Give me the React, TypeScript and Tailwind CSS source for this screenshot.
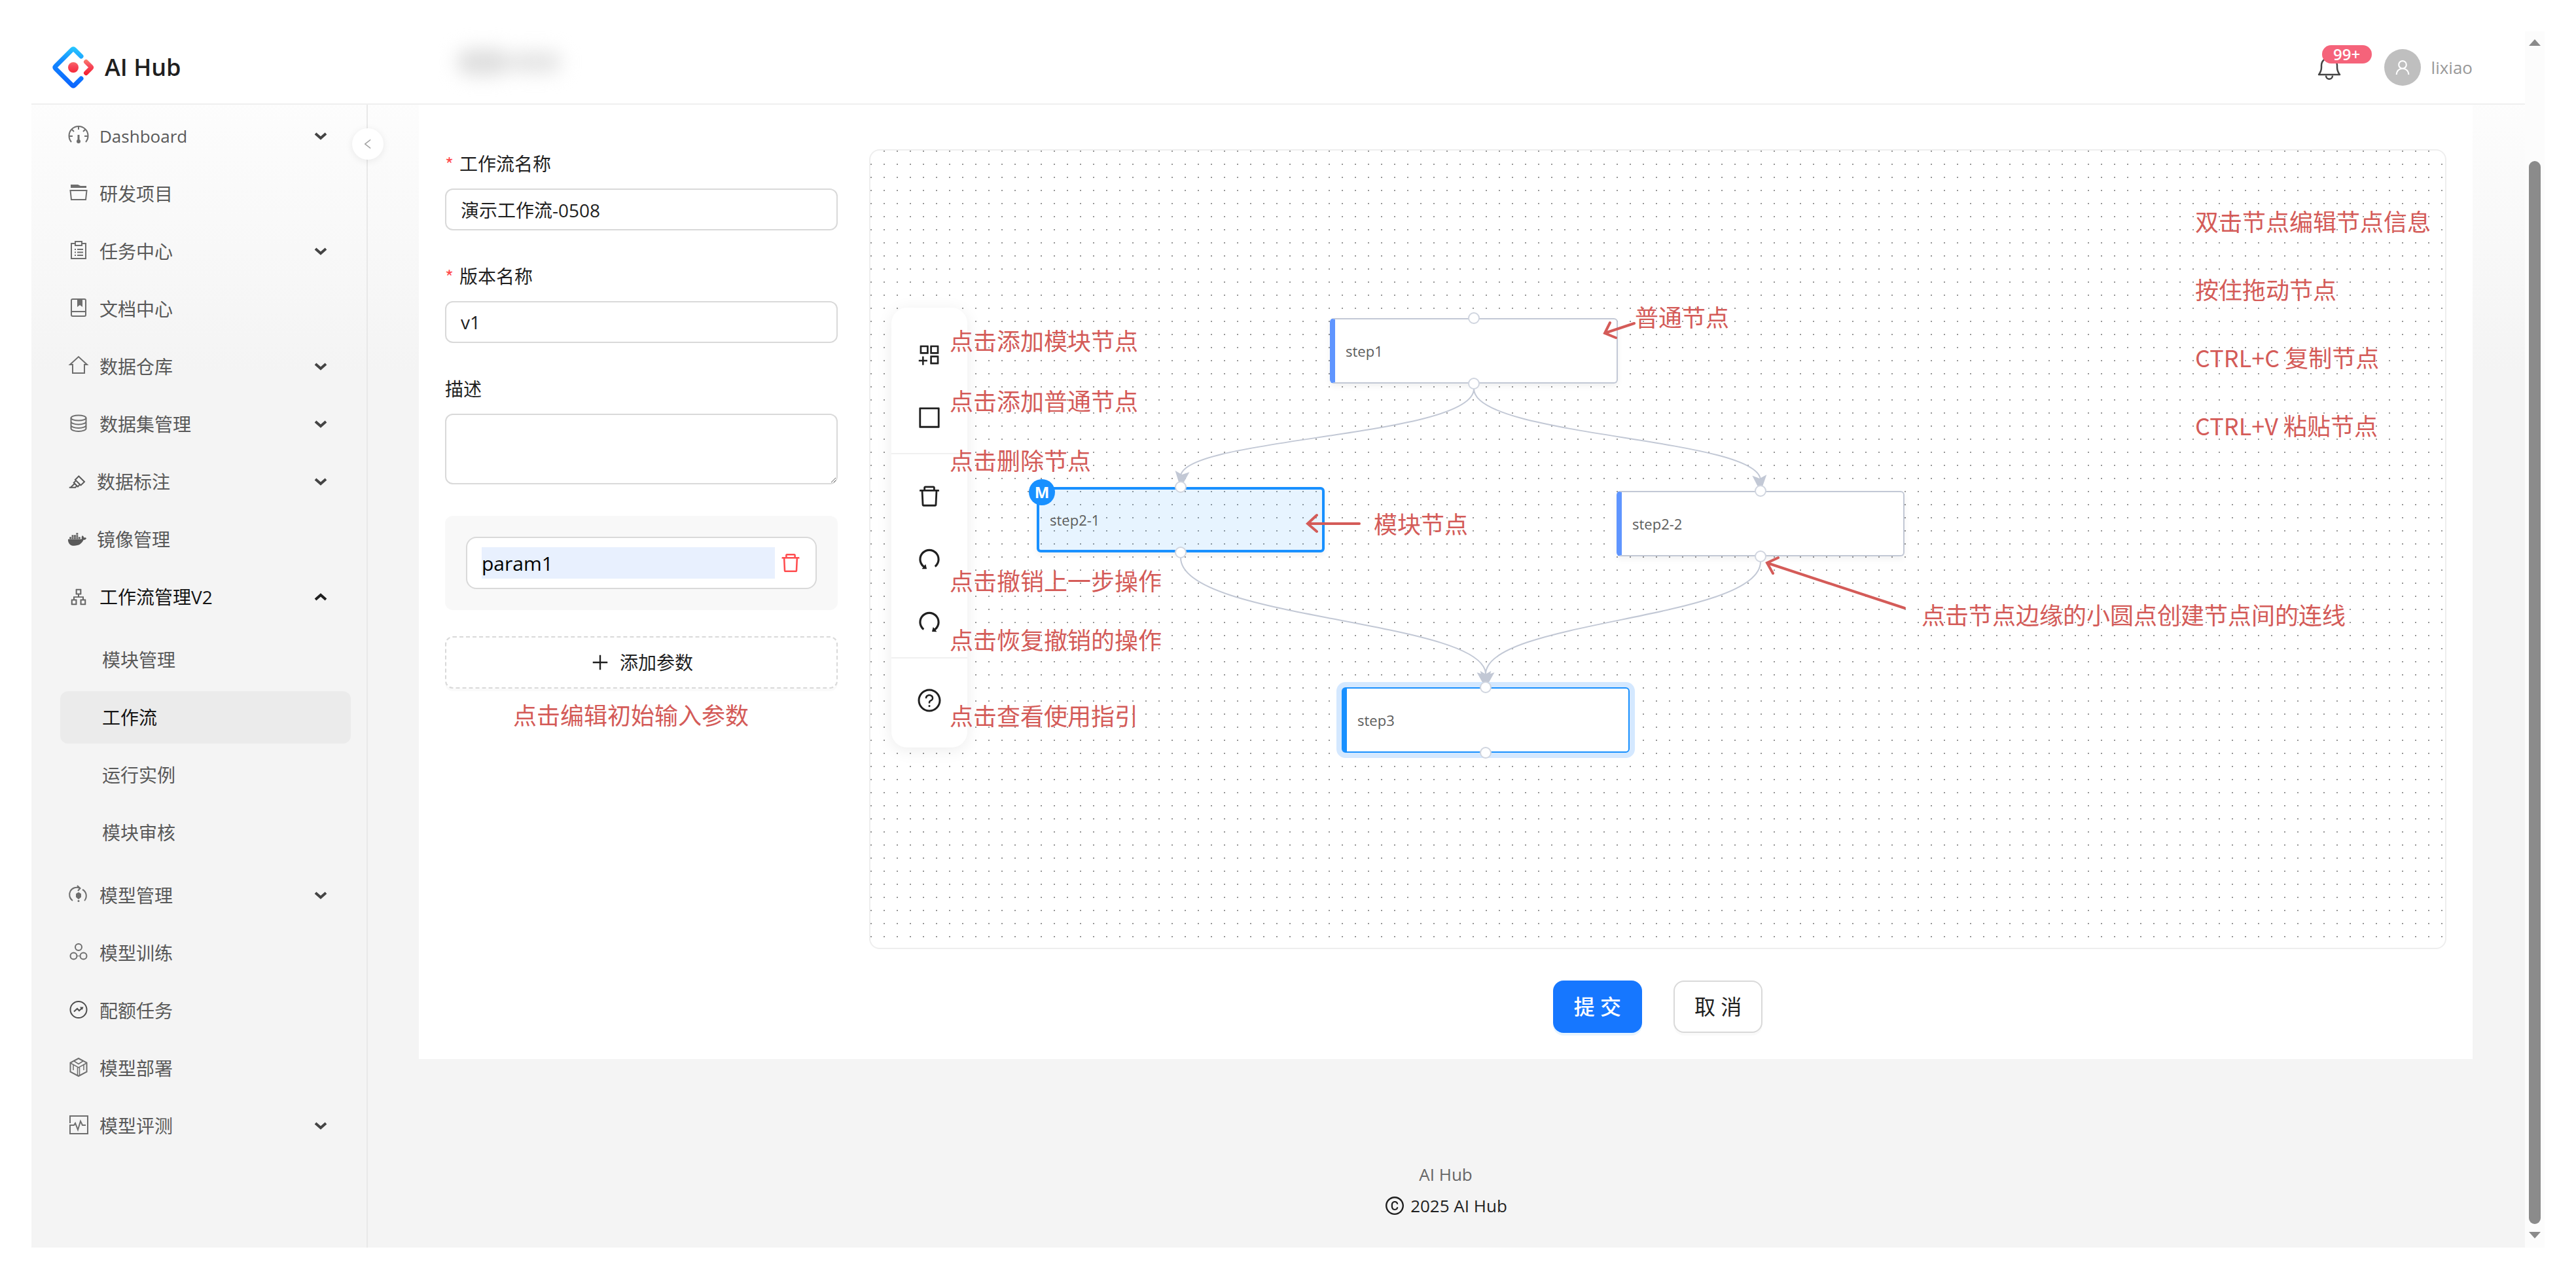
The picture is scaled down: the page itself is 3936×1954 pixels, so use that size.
import React from "react";
import type { ReactNode } from "react";
import {
  AiOutlineApartment,
  AiOutlineAppstoreAdd,
  AiOutlineBorder,
  AiOutlineCopyright,
  AiOutlineDelete,
  AiOutlineHighlight,
  AiOutlineLeft,
  AiOutlinePlus,
  AiOutlineQuestionCircle,
  AiOutlineRedo,
  AiOutlineUndo,
  AiOutlineUser,
} from "react-icons/ai";
import { FaDocker } from "react-icons/fa";

/* ---------- icons ---------- */

function MenuIcon({ children }: { children: ReactNode }) {
  return (
    <svg
      viewBox="0 0 28 28"
      className="size-7 shrink-0 overflow-visible text-[#6e6e6e]"
      fill="none"
      stroke="currentColor"
      strokeWidth="2"
      aria-hidden="true"
    >
      {children}
    </svg>
  );
}

const DashboardIcon = () => (
  <MenuIcon>
    <path d="M3 23A14.5 14.5 0 1 1 25 23" />
    <path d="M0 14h5M23 14h5M14 -1v5M4 4l3 3M24 4l-3 3" />
    <path d="M14 12v8" strokeWidth="3" />
    <circle cx="14" cy="22" r="3" fill="currentColor" stroke="none" />
  </MenuIcon>
);
const FolderIcon = () => (
  <MenuIcon>
    <path d="M2 0h11l4 2h9v3H2z" fill="currentColor" stroke="none" />
    <path d="M1.5 9h25l-1.5 14H3z" />
  </MenuIcon>
);
const TaskIcon = () => (
  <MenuIcon>
    <path d="M9 2H3v23h22V2h-6" />
    <path d="M9 -1h10v6H9z" />
    <path d="M8 11h2M12 11h9M8 15.500h2M12 15.500h9M8 20h2M12 20h9" />
  </MenuIcon>
);
const BookIcon = () => (
  <MenuIcon>
    <rect x="3" y="-1" width="22" height="26" rx="2" />
    <path d="M3 18h22" />
    <path d="M12 0h8v11l-4-3-4 3z" fill="currentColor" stroke="none" />
  </MenuIcon>
);
const HomeIcon = () => (
  <MenuIcon>
    <path d="M1 11h4v13h18V11h4L14 -1z" />
  </MenuIcon>
);
const DatabaseIcon = () => (
  <MenuIcon>
    <ellipse cx="14" cy="4.500" rx="11.500" ry="4" />
    <path d="M2.500 4.500v16c0 2.500 5 4.500 11.500 4.500s11.500-2 11.500-4.500v-16M2.500 10c0 2.500 5 4.500 11.500 4.500s11.500-2 11.500-4.500M2.500 15.500c0 2.500 5 4.500 11.500 4.500s11.500-2 11.500-4.500" />
  </MenuIcon>
);
const ModelIcon = () => (
  <MenuIcon>
    <path d="M5 22A11 11 0 0 1 16 3M12 -1l4.500 4L13 7M20 5A11 11 0 0 1 23 22" />
    <path d="M14 9l4 2.500v5L14 20l-4-3.500v-5z" fill="currentColor" stroke="none" />
    <circle cx="14" cy="22.500" r="1.500" fill="currentColor" stroke="none" />
  </MenuIcon>
);
const TrainIcon = () => (
  <MenuIcon>
    <circle cx="14" cy="5" r="5" />
    <circle cx="6.500" cy="18.500" r="5" />
    <circle cx="21.500" cy="18.500" r="5" />
    <path d="M11.500 18.500h5" strokeWidth="1" />
  </MenuIcon>
);
const QuotaIcon = () => (
  <MenuIcon>
    <g stroke="#4d4d4d">
      <circle cx="14" cy="12.500" r="12.500" />
      <path d="M7 15.500l5-4.500 3 3 5-4.500" />
      <path d="M16 8.500h5.500l-2 4.500z" fill="#4d4d4d" stroke="none" />
    </g>
  </MenuIcon>
);
const CubeIcon = () => (
  <MenuIcon>
    <path d="M14 -1L26.500 5.500v14L14 26 1.500 19.500v-14z" />
    <path d="M1.500 6L14 13l12.500-7M12.500 13v12M15.500 13v12M7 3l7 4.500L21 3M6 9v8M22 9v8" strokeWidth="1.500" />
  </MenuIcon>
);
const PulseIcon = () => (
  <MenuIcon>
    <path d="M1 10V-1h27v27H1V13h6l2-3 4 10 4-13 3 6h5" />
  </MenuIcon>
);

function Chevron({ up = false }: { up?: boolean }) {
  return (
    <svg viewBox="0 0 20 12" className="h-3 w-5" fill="none" stroke={up ? "#1f1f1f" : "#444444"} strokeWidth="4" aria-hidden="true">
      <path d={up ? "M2 10L10 3L18 10" : "M2 2L10 9L18 2"} />
    </svg>
  );
}

function Logo() {
  return (
    <svg viewBox="0 0 64 64" className="size-16" fill="none" strokeWidth="7" strokeLinecap="round" strokeLinejoin="round" aria-hidden="true">
      <defs>
        <linearGradient id="logo-blue" x1="40" y1="0" x2="24" y2="64" gradientUnits="userSpaceOnUse">
          <stop offset="0" stopColor="#29cdff" />
          <stop offset="0.4" stopColor="#148eff" />
          <stop offset="1" stopColor="#0a60ff" />
        </linearGradient>
        <linearGradient id="logo-red" x1="0" y1="20" x2="0" y2="44" gradientUnits="userSpaceOnUse">
          <stop offset="0" stopColor="#fa816e" />
          <stop offset="0.4" stopColor="#f74a5c" />
          <stop offset="1" stopColor="#f51d2c" />
        </linearGradient>
      </defs>
      <path d="M44 15L34 5Q32 3 30 5L5 30Q3 32 5 34L30 59Q32 61 34 59L44 49" stroke="url(#logo-blue)" />
      <path d="M51.500 23.500L59 31Q60 32 59 33L51.500 40.500" stroke="url(#logo-red)" />
      <circle cx="32" cy="32" r="8" fill="url(#logo-red)" />
    </svg>
  );
}

function BellIcon() {
  return (
    <svg viewBox="0 0 36 36" className="size-9 overflow-visible" fill="none" stroke="#444444" strokeWidth="2.500" strokeLinejoin="round" aria-hidden="true">
      <path d="M2 29C5 25 6 22 6 18V15A11.500 11.500 0 0 1 30 15V18C30 22 31 25 34 29Z" />
      <path d="M13 30.500C13 37.500 23 37.500 23 30.500" />
    </svg>
  );
}

/* ---------- side menu ---------- */

type Item = { label: string; icon: ReactNode; arrow?: "down" | "up"; tight?: boolean; latin?: boolean; children?: string[] };

const items: Item[] = [
  { label: "Dashboard", icon: <DashboardIcon />, arrow: "down", latin: true },
  { label: "研发项目", icon: <FolderIcon /> },
  { label: "任务中心", icon: <TaskIcon />, arrow: "down" },
  { label: "文档中心", icon: <BookIcon /> },
  { label: "数据仓库", icon: <HomeIcon />, arrow: "down" },
  { label: "数据集管理", icon: <DatabaseIcon />, arrow: "down" },
  { label: "数据标注", icon: <AiOutlineHighlight className="size-7 text-[#595959]" />, arrow: "down", tight: true },
  { label: "镜像管理", icon: <FaDocker className="size-7 text-[#595959]" />, tight: true },
  {
    label: "工作流管理V2",
    icon: <AiOutlineApartment className="size-7 text-[#666666]" />,
    arrow: "up",
    children: ["模块管理", "工作流", "运行实例", "模块审核"],
  },
  { label: "模型管理", icon: <ModelIcon />, arrow: "down" },
  { label: "模型训练", icon: <TrainIcon /> },
  { label: "配额任务", icon: <QuotaIcon /> },
  { label: "模型部署", icon: <CubeIcon /> },
  { label: "模型评测", icon: <PulseIcon />, arrow: "down" },
];

function Sidebar() {
  return (
    <aside className="relative w-[512px] shrink-0">
      <nav className="pt-2">
        <ul className="flex flex-col gap-2">
          {items.map((item) => (
            <li key={item.label}>
              <button
                type="button"
                className={`flex h-20 w-full items-center text-left ${item.tight ? "pl-14" : "pl-[58px]"} pr-[60px] ${item.arrow === "up" ? "text-[#141414]" : "text-[#595959]"}`}
              >
                {item.icon}
                <span className={`flex-1 leading-[44px] ${item.tight ? "ml-4" : "ml-[18px]"} ${item.latin ? "text-[26px]" : "text-[28px]"}`}>
                  {item.label}
                </span>
                {item.arrow && <Chevron up={item.arrow === "up"} />}
              </button>
              {item.children && (
                <ul className="mt-4 mb-4 flex flex-col gap-2 pr-6 pl-11 last:mb-2">
                  {item.children.map((child) => (
                    <li key={child}>
                      <a
                        href="#"
                        className={`flex h-20 items-center rounded-xl pl-16 text-[28px] leading-[44px] ${child === "工作流" ? "bg-[#ebebeb] text-[#141414]" : "text-[#595959]"}`}
                      >
                        {child}
                      </a>
                    </li>
                  ))}
                </ul>
              )}
            </li>
          ))}
        </ul>
      </nav>
      <button
        type="button"
        aria-label="收起菜单"
        className="absolute top-9 -right-[26px] z-10 flex size-12 items-center justify-center rounded-full bg-white text-[#a0a0a0] shadow-[0_2px_12px_rgba(0,0,0,0.08)]"
      >
        <AiOutlineLeft className="size-5" />
      </button>
    </aside>
  );
}

/* ---------- form ---------- */

function Field({ id, label, required, children }: { id: string; label: string; required?: boolean; children: ReactNode }) {
  return (
    <div className="mb-12">
      <label htmlFor={id} className="mb-4 flex gap-2 text-[28px] leading-[44px] text-[#1f1f1f]">
        {required && <span className="w-3.5 font-['Noto_Sans_CJK_SC'] text-[#ff4d4f]">*</span>}
        {label}
      </label>
      {children}
    </div>
  );
}

const inputStyle = "block h-16 w-full rounded-xl border-2 border-[#d9d9d9] bg-white px-[22px] text-[28px] text-[#1f1f1f]";

function WorkflowForm() {
  return (
    <form className="w-[600px] shrink-0">
      <Field id="name" label="工作流名称" required>
        <input id="name" className={inputStyle} defaultValue="演示工作流-0508" />
      </Field>
      <Field id="version" label="版本名称" required>
        <input id="version" className={inputStyle} defaultValue="v1" />
      </Field>
      <Field id="desc" label="描述">
        <textarea id="desc" className="block h-[108px] w-full resize-y rounded-xl border-2 border-[#d9d9d9] bg-white px-[22px] py-2 text-[28px]" />
      </Field>
      <div className="rounded-xl bg-[#f8f8f8] p-8">
        <div className="flex h-20 items-center rounded-2xl border-2 border-[#d9d9d9] bg-white pr-5 pl-[22px]">
          <input aria-label="参数名称" className="h-12 min-w-0 flex-1 bg-[#e8f0fe] text-[30px] text-black" defaultValue="param1" />
          <button type="button" aria-label="删除参数" className="ml-1.5 text-[#ff4d4f]">
            <AiOutlineDelete className="size-9" />
          </button>
        </div>
      </div>
      <button
        type="button"
        className="mt-10 flex h-20 w-full items-center justify-center gap-3.5 rounded-xl border-2 border-dashed border-[#d9d9d9] bg-white text-[28px] text-[#1f1f1f] shadow-[0_4px_0_rgba(0,0,0,0.02)]"
      >
        <AiOutlinePlus className="size-8" />
        添加参数
      </button>
      <p className="mt-4 ml-[104px] text-[36px] leading-[52px] text-[#d45b58]">点击编辑初始输入参数</p>
    </form>
  );
}

/* ---------- workflow canvas ---------- */

const edges = [
  "M922 364C922 438 474 438 474 498",
  "M922 364C922 438 1360 438 1360 504",
  "M474 622C474 717 940 717 940 800",
  "M1360 628C1360 717 940 717 940 800",
];
const heads = ["translate(474 514) rotate(6)", "translate(1360 520) rotate(-4)", "translate(940 820) rotate(-6)", "translate(940 820) rotate(6)"];

const labels = [
  { text: "点击添加模块节点", place: "left-[121px] top-[266px]" },
  { text: "点击添加普通节点", place: "left-[121px] top-[358px]" },
  { text: "点击删除节点", place: "left-[121px] top-[449px]" },
  { text: "点击撤销上一步操作", place: "left-[121px] top-[633px]" },
  { text: "点击恢复撤销的操作", place: "left-[121px] top-[723px]" },
  { text: "点击查看使用指引", place: "left-[121px] top-[839px]" },
  { text: "普通节点", place: "left-[1168px] top-[230px]" },
  { text: "模块节点", place: "left-[769px] top-[546px]" },
  { text: "点击节点边缘的小圆点创建节点间的连线", place: "left-[1606px] top-[685px]" },
];

const port = "absolute left-1/2 size-[18px] -translate-x-1/2 rounded-full border-2 border-[#d0d5df] bg-white";

function Node({ name, kind, place }: { name: string; kind: "normal" | "module" | "selected"; place: string }) {
  const skin = {
    normal: "border-2 border-l-8 border-[#c2c8d5] border-l-[#5f95ff] bg-white pl-4 shadow-[0_4px_10px_rgba(0,0,0,0.06)]",
    module: "border-4 border-[#1890ff] bg-[#1890ff]/10 pl-4 shadow-[0_4px_10px_rgba(0,0,0,0.06)]",
    selected: "border-2 border-l-8 border-[#1890ff] bg-white pl-4 shadow-[0_0_0_8px_#d4e8ff]",
  }[kind];
  return (
    <div className={`absolute h-[100px] w-[440px] ${place}`}>
      <div className={`flex h-full items-center rounded-md text-[22px] text-[#5c5c5c] ${skin}`}>{name}</div>
      <span className={`${port} -top-[9px]`} />
      <span className={`${port} -bottom-[9px]`} />
      {kind === "module" && (
        <span className="absolute -top-3 -left-3 flex size-10 items-center justify-center rounded-full bg-[#1890ff] text-[24px] font-bold text-white">M</span>
      )}
    </div>
  );
}

function ToolGroup({ tools }: { tools: { label: string; icon: ReactNode }[] }) {
  return (
    <div className="flex flex-col">
      {tools.map((tool) => (
        <button key={tool.label} type="button" aria-label={tool.label} className="flex h-24 items-center justify-center">
          {tool.icon}
        </button>
      ))}
    </div>
  );
}

function Canvas() {
  return (
    <section
      aria-label="工作流画布"
      className="relative h-[1222px] overflow-hidden rounded-2xl border-2 border-[#eeeeee] bg-[conic-gradient(from_270deg_at_2px_2px,#969696_90deg,transparent_90deg)] bg-[length:20px_20px]"
    >
      <svg className="absolute top-0 left-0 h-[1218px] w-[2000px]" viewBox="0 0 2000 1218" fill="none" aria-hidden="true">
        <g stroke="#c2c8d5" strokeWidth="2">
          {edges.map((d) => (
            <path key={d} d={d} />
          ))}
        </g>
        {heads.map((t) => (
          <path key={t} transform={t} d="M-11 -24L0 -19L11 -24L2 -3H-2Z" fill="#c2c8d5" />
        ))}
      </svg>

      <Node name="step1" kind="normal" place="left-[702px] top-[256px]" />
      <Node name="step2-1" kind="module" place="left-[254px] top-[514px]" />
      <Node name="step2-2" kind="normal" place="left-[1140px] top-[520px]" />
      <Node name="step3" kind="selected" place="left-[720px] top-[820px]" />

      <div role="toolbar" aria-label="画布工具" className="absolute top-60 left-8 w-[116px] rounded-3xl bg-white pt-6 pb-6 text-[#1f1f1f] shadow-[0_4px_24px_rgba(0,0,0,0.08)]">
        <ToolGroup
          tools={[
            { label: "添加模块节点", icon: <AiOutlineAppstoreAdd className="size-10" /> },
            { label: "添加普通节点", icon: <AiOutlineBorder className="size-10" /> },
          ]}
        />
        <hr className="mt-1.5 mb-4 border-t-2 border-[#f0f0f0]" />
        <ToolGroup
          tools={[
            { label: "删除节点", icon: <AiOutlineDelete className="size-10" /> },
            { label: "撤销", icon: <AiOutlineUndo className="size-10" /> },
            { label: "恢复", icon: <AiOutlineRedo className="size-10" /> },
          ]}
        />
        <hr className="mt-1.5 mb-4 border-t-2 border-[#f0f0f0]" />
        <ToolGroup tools={[{ label: "使用指引", icon: <AiOutlineQuestionCircle className="size-10" /> }]} />
      </div>

      <svg className="absolute top-0 left-0 h-[1218px] w-[2000px]" viewBox="0 0 2000 1218" fill="none" stroke="#d45b58" strokeWidth="4" strokeLinecap="round" aria-hidden="true">
        <path d="M1167 264L1122 279M1130 263L1122 279L1139 286" />
        <path d="M747 570H668M682 557L668 570L682 582" />
        <path d="M1580 699L1370 630M1387 622L1370 630L1379 646" />
      </svg>
      {labels.map((l) => (
        <p key={l.text} className={`absolute text-[36px] leading-[52px] whitespace-nowrap text-[#d45b58] ${l.place}`}>
          {l.text}
        </p>
      ))}
      <div className="absolute top-[81px] right-[22px] flex flex-col gap-[52px] font-['Noto_Sans_CJK_SC',sans-serif] text-[36px] leading-[52px] text-[#d45b58]">
        <p>双击节点编辑节点信息</p>
        <p>按住拖动节点</p>
        <p>CTRL+C 复制节点</p>
        <p>CTRL+V 粘贴节点</p>
      </div>
    </section>
  );
}

/* ---------- page ---------- */

function Header() {
  return (
    <header className="flex h-28 items-center border-b-2 border-[#efefef] bg-white pr-20 pl-8">
      <a href="#" className="flex w-[560px] items-center gap-4">
        <Logo />
        <span className="text-[36px] font-semibold text-[#1f1f1f]">AI Hub</span>
      </a>
      <div className="mb-4 ml-[58px] flex items-center blur-[14px]">
        <div className="h-10 w-20 rounded-full bg-[#dedede]" />
        <div className="h-8 w-20 rounded-full bg-[#e4e4e4]" />
      </div>
      <div className="ml-auto flex items-center">
        <button type="button" aria-label="通知 99+" className="relative mr-[66px]">
          <BellIcon />
          <span className="absolute -top-4 left-[7px] flex h-7 w-[76px] items-center justify-center rounded-full bg-[#f5637a] text-[24px] font-semibold text-white">99+</span>
        </button>
        <button type="button" className="flex items-center gap-4 text-[26px] text-[#999999]">
          <span className="flex size-14 items-center justify-center rounded-full bg-[#bfbfbf] text-white">
            <AiOutlineUser className="size-7" />
          </span>
          lixiao
        </button>
      </div>
    </header>
  );
}

function ScrollRail() {
  return (
    <div className="flex w-[30px] shrink-0 flex-col items-center bg-[#fcfcfc] pt-3 pb-3.5" aria-hidden="true">
      <svg viewBox="0 0 18 10" className="h-2.5 w-[18px] fill-[#8b8b8b]">
        <path d="M9 0L18 10H0Z" />
      </svg>
      <div className="mt-44 mb-3 w-[18px] flex-1 rounded-full bg-[#8b8b8b]" />
      <svg viewBox="0 0 18 10" className="h-2.5 w-[18px] fill-[#8b8b8b]">
        <path d="M9 10L0 0H18Z" />
      </svg>
    </div>
  );
}

export default function App() {
  return (
    <div className="flex min-h-screen bg-white p-12 font-['Open_Sans','Noto_Sans_CJK_SC',sans-serif]">
      <div className="flex min-w-0 flex-1 bg-[linear-gradient(#ffffff,#f4f4f4_28%)]">
        <div className="flex min-w-0 flex-1 flex-col">
          <Header />
          <div className="flex flex-1">
            <Sidebar />
            <div className="flex min-w-0 flex-1 flex-col border-l-2 border-[#e8e8e8] pr-20 pl-[78px]">
              <main className="flex gap-12 bg-white px-10 pt-[68px] pb-10">
                <WorkflowForm />
                <div className="min-w-0 flex-1">
                  <Canvas />
                  <div className="mt-12 flex justify-center gap-12 text-[32px]">
                    <button type="button" className="h-20 rounded-2xl bg-[#1677ff] px-8 font-medium text-white shadow-[0_4px_0_rgba(5,145,255,0.1)]">
                      提 交
                    </button>
                    <button type="button" className="h-20 rounded-2xl border-2 border-[#d9d9d9] bg-white px-[30px] text-[#1f1f1f] shadow-[0_4px_0_rgba(0,0,0,0.02)]">
                      取 消
                    </button>
                  </div>
                </div>
              </main>
              <footer className="mt-auto flex flex-col items-center pb-10 text-[26px] leading-[48px]">
                <a href="#" className="text-[#666666]">AI Hub</a>
                <p className="flex items-center gap-2 text-[#1f1f1f]">
                  <AiOutlineCopyright className="size-8" />
                  2025 AI Hub
                </p>
              </footer>
            </div>
          </div>
        </div>
        <ScrollRail />
      </div>
    </div>
  );
}
